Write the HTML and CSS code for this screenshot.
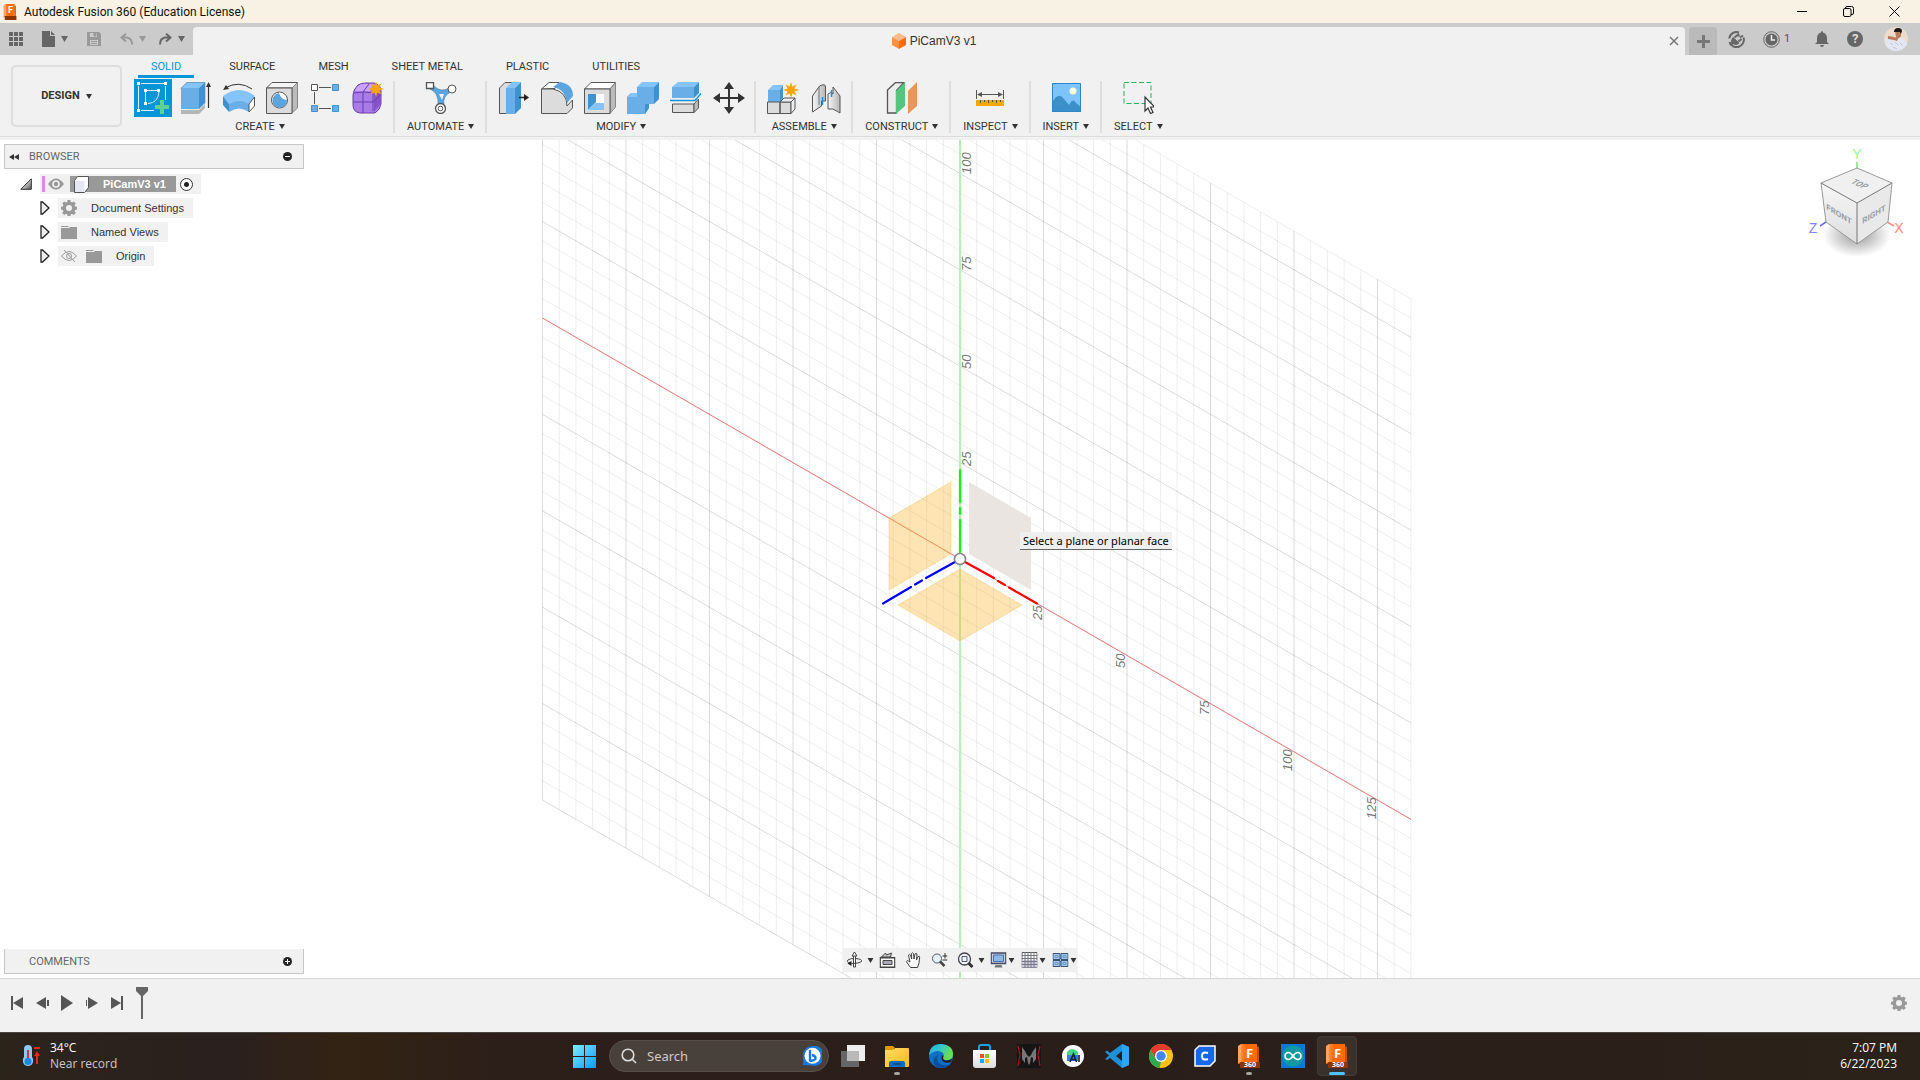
FILE: index.html
```html
<!DOCTYPE html>
<html lang="en">
<head>
<meta charset="utf-8">
<title>Autodesk Fusion 360 (Education License)</title>
<link rel="stylesheet" href="styles.css">
</head>
<body>
<svg class="defs" aria-hidden="true">
  <defs>
    <linearGradient id="gOrange" x1="0" x2="1"><stop offset="0" stop-color="#ff8a3c"/><stop offset=".3" stop-color="#ff6b00"/><stop offset="1" stop-color="#ff6b00"/></linearGradient>
    <linearGradient id="gWin" x1="0" y1="0" x2="1" y2="1"><stop offset="0" stop-color="#7cecff"/><stop offset="1" stop-color="#0a9bff"/></linearGradient>
    <linearGradient id="gFolder" x1="0" y1="0" x2="1" y2="1"><stop offset="0" stop-color="#ffdc6b"/><stop offset="1" stop-color="#fcb912"/></linearGradient>
    <linearGradient id="gEdge" x1="0" y1="0" x2="1" y2=".4"><stop offset="0" stop-color="#2ba9e8"/><stop offset=".5" stop-color="#33c7c9"/><stop offset="1" stop-color="#6be04f"/></linearGradient>
    <linearGradient id="gStore" x1="0" y1="0" x2="0" y2="1"><stop offset="0" stop-color="#fff"/><stop offset="1" stop-color="#dcdcdc"/></linearGradient>
    <linearGradient id="gMetal" x1="0" x2="1"><stop offset="0" stop-color="#f6f6f6"/><stop offset="1" stop-color="#b5b5b5"/></linearGradient>
    <linearGradient id="gTri" x1="0" y1="0" x2="1" y2="1"><stop offset=".3" stop-color="#eee"/><stop offset="1" stop-color="#555"/></linearGradient>
    <symbol id="caret" viewBox="0 0 6 5"><path d="M0 0h6L3 5z" fill="currentColor"/></symbol>
    <symbol id="star" viewBox="0 0 16 16"><path d="M8 0l1.400 4.600L13.600 2.400 11.400 6.600 16 8l-4.600 1.400 2.200 4.200-4.200-2.200L8 16l-1.400-4.600-4.200 2.200 2.200-4.200L0 8l4.600-1.400L2.400 2.400l4.200 2.200z" fill="#ffa500"/></symbol>
    <symbol id="gear" viewBox="0 0 16 16"><path fill-rule="evenodd" fill="currentColor" d="M6.600 0h2.800l.4 2 1.300.5 1.700-1.100 2 2-1.200 1.700.5 1.300 1.900.300v2.800l-1.900.4-.5 1.300 1.200 1.700-2 2-1.700-1.200-1.300.5-.4 1.900H6.600l-.4-1.900-1.300-.5-1.700 1.200-2-2 1.200-1.700-.5-1.300L0 9.500V6.700l1.900-.3.5-1.300-1.200-1.700 2-2 1.700 1.100L6.200 2zM8 5a3 3 0 1 0 0 6 3 3 0 0 0 0-6z"/></symbol>
    <symbol id="folder" viewBox="0 0 16 14"><path d="M0 1h7l1 1H0zM0 3h8l1-1h7v12H0z" fill="#999"/></symbol>
    <symbol id="expand" viewBox="0 0 10 14"><path d="M1 1h1.500L9 7l-6.500 6H1z" fill="#eee" stroke="#222" stroke-width="1.300"/></symbol>
    <symbol id="fusion" viewBox="0 0 24 24"><path d="M1 2l3-2v19l-3 1z" fill="#ffa366"/><path d="M4 0h16v18H4z" fill="url(#gOrange)"/><path d="M20 2l2 1v19h-2z" fill="#c25000"/><path d="M3 18h20v6H3z" fill="#8a3600"/><path d="M3 18l-2 2h2z" fill="#c25000"/></symbol>
  </defs>
</svg>

<header class="titlebar">
  <span class="app-badge"><svg width="14" height="16" viewBox="0 0 24 24" preserveAspectRatio="none"><use href="#fusion"/></svg><b>F</b></span>
  <h1 class="app-title">Autodesk Fusion 360 (Education License)</h1>
  <div class="win-controls">
    <button aria-label="Minimize"><svg width="11" height="11"><path d="M0 5.500h10" stroke="#000"/></svg></button>
    <button aria-label="Restore"><svg width="11" height="11" fill="none" stroke="#000"><rect x=".5" y="2.500" width="7.500" height="8" rx="1.500"/><path d="M2.500 2.500V2q0-1.500 1.500-1.500h4.500q2 0 2 2V7q0 1.500-1.500 1.500H8"/></svg></button>
    <button aria-label="Close"><svg width="11" height="11"><path d="M.5.500l10 10m0-10l-10 10" stroke="#000"/></svg></button>
  </div>
</header>

<div class="tabbar">
  <div class="quick">
    <button aria-label="Data panel"><svg width="14" height="14" fill="#666"><path d="M0 0h4v4H0zM5 0h4v4H5zM10 0h4v4h-4zM0 5h4v4H0zM5 5h4v4H5zM10 5h4v4h-4zM0 10h4v4H0zM5 10h4v4H5zM10 10h4v4h-4z"/></svg></button>
    <button aria-label="File"><svg width="13" height="16" fill="#666"><path d="M0 0h8v5h5v11H0zM9 0l4 4H9z"/></svg><svg class="caret-lg"><use href="#caret"/></svg></button>
    <button class="faded" aria-label="Save"><svg width="14" height="14"><path d="M0 0h12l2 2v12H0z" fill="#999"/><path d="M3 1h7v4H3zM3 8h8v5H3z" fill="#cbcbcb"/><path d="M7 1h2v3H7zM4 9.500h6M4 11.500h6" stroke="#999" fill="#999"/></svg></button>
    <button class="faded" aria-label="Undo"><svg width="13" height="12" fill="none" stroke="#999" stroke-width="2"><path d="M6 .8L1.500 4.500 6 8.500M2 4.500h5q5 1 5 7"/></svg><svg class="caret-lg"><use href="#caret"/></svg></button>
    <button class="redo" aria-label="Redo"><svg width="13" height="12" fill="none" stroke="#666" stroke-width="2"><path d="M7 .8l4.500 3.700L7 8.500M11 4.500H6q-5 1-5 7"/></svg><svg class="caret-lg"><use href="#caret"/></svg></button>
  </div>
  <div class="doc-tab">
    <svg width="14" height="16"><path d="M7 0l7 4-7 4-7-4z" fill="#ffb98a"/><path d="M0 4l7 4v8l-7-4z" fill="#ff9147"/><path d="M14 4L7 8v8l7-4z" fill="#ff6b00"/></svg>
    <span>PiCamV3 v1</span>
    <button class="doc-close" aria-label="Close tab"><svg width="10" height="10"><path d="M1 1l8 8m0-8L1 9" stroke="#777" stroke-width="1.500"/></svg></button>
  </div>
  <button class="new-tab" aria-label="New tab"><svg width="13" height="13"><path d="M0 6.500h13M6.500 0v13" stroke="#777" stroke-width="3"/></svg></button>
  <div class="account">
    <button aria-label="Extensions"><svg width="17" height="17" viewBox="0 0 17 17" fill="none" stroke="#666"><path d="M11 1.500A7.300 7.300 0 0 0 1.300 7.500M1.500 11A7.300 7.300 0 1 0 15.500 6.500" stroke-width="2"/><path d="M2 14l4-3.500" stroke-width="2.500"/><path d="M5 6.500l6 5.500q-3 3-6 .500t0-6z" fill="#666"/><path d="M6.500 6.500l3-2.500M10.500 10.500l3-2.500M10 2.500l1 3M15 4.500l-3 2" stroke-width="2"/></svg></button>
    <button class="jobs" aria-label="Job status"><svg width="17" height="17"><circle cx="8.500" cy="8.500" r="7.800" fill="none" stroke="#666"/><circle cx="8.500" cy="8.500" r="6" fill="#666"/><path d="M8.500 4v5H12" stroke="#eee" stroke-width="1.500" fill="none"/></svg><span>1</span></button>
    <button aria-label="Notifications"><svg width="14" height="16"><path d="M7 0q1 0 1 1.500 4 1 4 6V11l2 2H0l2-2V7.500q0-5 4-6Q6 0 7 0zM5 14h4q-.5 2-2 2t-2-2z" fill="#666"/></svg></button>
    <button class="help" aria-label="Help">?</button>
    <button class="profile" aria-label="Profile"><svg width="24" height="24"><clipPath id="face"><circle cx="12" cy="12" r="12"/></clipPath><g clip-path="url(#face)"><path d="M0 0h24v24H0z" fill="#ecdccb"/><path d="M1 12q6-2 9 2l5-4q8 0 8 10v5H3z" fill="#e3e7f1"/><path d="M4 9q4 0 7 1.500l4-.500-2 4-3-1-6-1z" fill="#b87d5c"/><path d="M11 4h6v5q-2 4-5 1z" fill="#b87d5c"/><path d="M10 5q0-4 4-4t4 3l-1 3-1-2h-4z" fill="#1d1715"/><path d="M6 16l3 2m2-3l3 3m-5 2l4 2m3-6l3 3" stroke="#bfc6d8"/></g></svg></button>
  </div>
</div>

<section class="ribbon">
  <button class="workspace">DESIGN <svg class="caret"><use href="#caret"/></svg></button>
  <div class="ribbon-main">
    <nav class="ribbon-tabs">
      <a class="active" href="#solid">SOLID</a><a href="#surface">SURFACE</a><a href="#mesh">MESH</a><a href="#sheet">SHEET METAL</a><a href="#plastic">PLASTIC</a><a href="#utilities">UTILITIES</a>
    </nav>
    <div class="panels">
      <div class="panel create">
        <div class="tools">
          <button class="on" aria-label="Create Sketch"><svg viewBox="0 0 38 38" width="38" height="38" fill="none" stroke="#fff"><path d="M7 4.500h23M31.500 7v14M4.500 7v23M7 31.500h13" stroke="#d8ecf8"/><path d="M3 3h3v3H3zM30 3h3v3h-3zM3 30h3v3H3z" fill="#fff" stroke="none"/><path d="M13 11.500h10M11.500 13v10M25 13q-1 11-11 11.500" stroke="#d8ecf8"/><path d="M10 10h3v3h-3zM23 10h3v3h-3zM10 23h3v3h-3z" fill="#fff" stroke="none"/><path d="M28 21v14M21 28h14" stroke="#5fd38d" stroke-width="4"/></svg></button>
          <button aria-label="Extrude"><svg viewBox="0 0 32 32"><path d="M1 28h18l6-6v4l-6 6H1z" fill="#b5b5b5"/><path d="M1 6l6-6h18l-6 6z" fill="#84c4fa"/><path d="M1 6h18v21H1z" fill="#69aee6"/><path d="M19 6l6-6v21l-6 6z" fill="#3f92cf"/><path d="M.5 6.500L7 .5h18v21" fill="none" stroke="#5e88a8" stroke-width=".6"/><path d="M28.500 26V3" stroke="#333" stroke-width="1.200"/><path d="M28.500 0l2.500 5h-5z" fill="#333"/></svg></button>
          <button aria-label="Revolve"><svg viewBox="0 0 32 32"><path d="M0 14q16-12 32 0l-6 8q-9-7-20 0z" fill="#84c4fa"/><path d="M0 14l6 8v8l-6-7z" fill="#3f92cf"/><path d="M6 22q11-7 20 0v8q-10-7-20 0z" fill="#69aee6"/><path d="M26 22l5.500-7v9L26 30z" fill="#fff" stroke="#555"/><path d="M2 6q14-8 27 1" fill="none" stroke="#333"/><path d="M0 8l3-5 3 4z" fill="#333"/></svg></button>
          <button aria-label="Hole"><svg viewBox="0 0 32 32"><path d="M.5 6L6 .500h25.500L26 6z" fill="#f4f4f4" stroke="#555"/><path d="M26 6l5.500-5.500V26L26 31z" fill="#bbb" stroke="#888"/><path d="M.5 6H26v25.500H.5z" fill="#dcdcdc" stroke="#555"/><circle cx="13.500" cy="18" r="8" fill="#fff" stroke="#555"/><path d="M13 11q2 7 8 7 0 7-7 7.500-7 0-7.500-7Q7 12 13 11z" fill="#5aa5e0"/></svg></button>
          <button aria-label="Pattern"><svg viewBox="0 0 32 32"><path d="M10 5.500h12M10 26.500h12M5.500 10v12" stroke="#555"/><path d="M2.500 2.500h6v6h-6z" fill="#fff" stroke="#555"/><path d="M23.500 2.500h6v6h-6zM2.500 23.500h6v6h-6zM23.500 23.500h6v6h-6z" fill="#69aee6" stroke="#3f92cf"/></svg></button>
          <button aria-label="Create Form"><svg viewBox="0 0 32 32"><path d="M1 13Q1 8 6 3q3-2 8-2h8q7 2 7 8v13q-1 6-6 9H8q-7-1-7-8z" fill="#a97be8" stroke="#6a3fae"/><path d="M5 5q4-4 9-3h8L18 9H3z" fill="#c9a3ff"/><path d="M22 12l7-5v14l-7 9z" fill="#8450cc"/><path d="M1 20h20l8-8M11 10v21M2 11q10-2 19 0v18M11 10l6-8" fill="none" stroke="#6a3fae"/><use href="#star" x="16" y="-1" width="16" height="16"/></svg></button>
        </div>
        <button class="menu">CREATE <svg class="caret"><use href="#caret"/></svg></button>
      </div>
      <div class="panel">
        <div class="tools">
          <button aria-label="Automate"><svg viewBox="0 0 32 32"><path d="M5 7q9 4 8 16h6Q17 14 27 9l-3-3q-8 5-15-2z" fill="#5aa5e0" stroke="#3f7fb0" stroke-width=".6"/><path d="M14 12h5l-2 6z" fill="#f1f1f1"/><circle cx="27" cy="7" r="4" fill="#fff" stroke="#555"/><path d="M1.500.500h7v6h-7z" fill="#fff" stroke="#555" stroke-width="1.300"/><circle cx="15.500" cy="26.500" r="5" fill="#fff" stroke="#555" stroke-width="1.300"/><circle cx="15.500" cy="26.500" r="2.300" fill="none" stroke="#555"/></svg></button>
        </div>
        <button class="menu">AUTOMATE <svg class="caret"><use href="#caret"/></svg></button>
      </div>
      <div class="panel">
        <div class="tools">
          <button aria-label="Press Pull"><svg viewBox="0 0 32 32"><path d="M1.500 6L7 .500h9l-5 5.500v25.500H1.500z" fill="#dcdcdc" stroke="#555"/><path d="M8 6l6-6h9l-6 6z" fill="#84c4fa"/><path d="M8 6h9v26H8z" fill="#69aee6"/><path d="M17 6l6-6v26l-6 6z" fill="#3f92cf"/><path d="M21 15.500h6" stroke="#222" stroke-width="1.500"/><path d="M26 12l5 3.500-5 3.500z" fill="#222"/></svg></button>
          <button aria-label="Fillet"><svg viewBox="0 0 32 32"><path d="M.5 7L8 .5h10l-4 6h-2z" fill="#fff" stroke="#555"/><path d="M.5 7H12q14 3 14 17l5.500-6v8L26 31.500H.5z" fill="#dcdcdc" stroke="#555"/><path d="M12 5l7-5q13 2 13 14l-6 7Q24 7 12 5z" fill="#5aa5e0"/></svg></button>
          <button aria-label="Shell"><svg viewBox="0 0 32 32"><path d="M.5 7L7 .500h24.500L26 7z" fill="#fff" stroke="#555"/><path d="M26 7l5.500-6.500V25L26 31.500z" fill="#bbb" stroke="#888"/><path d="M.5 7H26v24.500H.5z" fill="#dcdcdc" stroke="#555"/><path d="M4 12h16v16H4z" fill="#fff"/><path d="M4 12h8v8l-8 8z" fill="#3f92cf"/><path d="M4 28l7-7h9v7z" fill="#84c4fa"/></svg></button>
          <button aria-label="Combine"><svg viewBox="0 0 32 32"><path d="M10 5l5-5h17l-5 5z" fill="#84c4fa"/><path d="M27 5l5-5v17l-5 5z" fill="#3f92cf"/><path d="M0 15l4-4h6V5h17v17h-5v4l-4 6H0z" fill="#69aee6"/><path d="M18 22h4v4l-4 6z" fill="#3f92cf"/><path d="M0 15l4-4h6v4z" fill="#84c4fa"/></svg></button>
          <button aria-label="Split Body"><svg viewBox="0 0 32 32"><path d="M2 5l6-5h21l-5 5z" fill="#84c4fa"/><path d="M2 5h22v11H2z" fill="#69aee6"/><path d="M24 5l5-5v11l-5 5z" fill="#3f92cf"/><path d="M2.500 22H24v8.500H2.500z" fill="#dcdcdc" stroke="#555"/><path d="M24 22l4.500-5v9L24 30.500z" fill="#bbb" stroke="#555"/><path d="M0 18.500h25l6-7" fill="none" stroke="#1192e0" stroke-width="1.400"/></svg></button>
          <button aria-label="Move"><svg viewBox="0 0 32 32"><path d="M16 5v22M5 16h22" stroke="#333" stroke-width="2"/><path d="M16 0l5 7H11zM16 32l5-7H11zM0 16l7-5v10zM32 16l-7-5v10z" fill="#333"/></svg></button>
        </div>
        <button class="menu">MODIFY <svg class="caret"><use href="#caret"/></svg></button>
      </div>
      <div class="panel">
        <div class="tools">
          <button aria-label="New Component"><svg viewBox="0 0 32 32"><path d="M1 8l5-5h10l-3 5z" fill="#84c4fa"/><path d="M1 8h12v12H1z" fill="#69aee6"/><path d="M13 8l3-5v13l-3 4z" fill="#3f92cf"/><path d="M.5 20h12.500v11.500H.5zM13 20h11v11.500H13z" fill="#dcdcdc" stroke="#555"/><path d="M13 20l4-4h11l-4 4zM24 20l4-4v11l-4 4.500z" fill="#eee" stroke="#555"/><use href="#star" x="16" y="0" width="16" height="16"/></svg></button>
          <button aria-label="Joint"><svg viewBox="0 0 32 32"><path d="M2.500 14l7-10q6-3 6 1v14h-4v5l-9 6z" fill="url(#gMetal)" stroke="#555"/><path d="M9 5v18" stroke="#777"/><path d="M30 31l-7-4h-5V12q3-3 5 0V5l7 9z" fill="url(#gMetal)" stroke="#555"/><path d="M12.500 15v8M21.500 8v7" stroke="#1192e0" stroke-width="1.500"/></svg></button>
        </div>
        <button class="menu">ASSEMBLE <svg class="caret"><use href="#caret"/></svg></button>
      </div>
      <div class="panel">
        <div class="tools">
          <button aria-label="Offset Plane"><svg viewBox="0 0 32 32"><path d="M1.500 8l8-7.500H18l-7.500 8v22.500h-9z" fill="#ececec" stroke="#555" stroke-width="1.300"/><path d="M10 9l9-9v24l-9 8z" fill="#55c47c"/><path d="M22 9l9-9v24l-9 8z" fill="#e8965f"/></svg></button>
        </div>
        <button class="menu">CONSTRUCT <svg class="caret"><use href="#caret"/></svg></button>
      </div>
      <div class="panel">
        <div class="tools">
          <button aria-label="Measure"><svg viewBox="0 0 32 32"><path d="M2.500 8v9M29.500 8v9M4 12.500h24" stroke="#555"/><path d="M3 12.500l5-2.500v5zM29 12.500l-5-2.500v5z" fill="#555"/><path d="M2 18h28v6H2z" fill="#ffa500"/><path d="M6.500 18v3M10.500 18v2M14.500 18v3M18.500 18v2M22.500 18v3M26.500 18v2" stroke="#555"/></svg></button>
        </div>
        <button class="menu">INSPECT <svg class="caret"><use href="#caret"/></svg></button>
      </div>
      <div class="panel">
        <div class="tools">
          <button aria-label="Insert image"><svg viewBox="0 0 32 32"><path d="M2 1h29v29H2z" fill="#7cc4fb"/><path d="M2 21q6-12 12-4l5 6q4-7 6-3l6 5v5H2z" fill="#3b90c9"/><path d="M2.500 1.500h28v28h-28z" fill="none" stroke="#2f86c4"/><circle cx="23" cy="9" r="3.500" fill="#fffbd5"/></svg></button>
        </div>
        <button class="menu">INSERT <svg class="caret"><use href="#caret"/></svg></button>
      </div>
      <div class="panel last">
        <div class="tools">
          <button aria-label="Select"><svg viewBox="0 0 32 32"><rect x="2" y=".5" width="27" height="21" fill="none" stroke="#27b35a" stroke-dasharray="5 2.500"/><path d="M23 15v14l3-3 2.500 5.500 2.500-1-2.500-5.500h4z" fill="#fff" stroke="#333" stroke-width="1.200"/></svg></button>
        </div>
        <button class="menu">SELECT <svg class="caret"><use href="#caret"/></svg></button>
      </div>
    </div>
  </div>
</section>

<main class="viewport">
  <svg class="scene" viewBox="0 140 1920 838" preserveAspectRatio="xMidYMid slice">
    <g id="grid" fill="none" transform="matrix(16.7 9.640 0 19.280 960 559)"></g>
    <path class="axis-y" d="M960 0v1041"/>
    <path class="axis-x" d="M542.500 318L1411 819.400"/>
    <g class="ticks">
      <text transform="translate(971 174) rotate(-90)">100</text>
      <text transform="translate(971 271) rotate(-90)">75</text>
      <text transform="translate(971 369) rotate(-90)">50</text>
      <text transform="translate(971 466) rotate(-90)">25</text>
      <text transform="translate(1042 620) rotate(-90)">25</text>
      <text transform="translate(1125 668) rotate(-90)">50</text>
      <text transform="translate(1209 715) rotate(-90)">75</text>
      <text transform="translate(1292 771) rotate(-90)">100</text>
      <text transform="translate(1376 819) rotate(-90)">125</text>
    </g>
    <path class="plane" d="M951 482l-62 36v72l62-36zM960 569l62 36-62 36-62-36z"/>
    <path class="plane-hover" d="M969 482l62 36v72l-62-36z"/>
    <g stroke-width="2.200" stroke-linecap="round">
      <path stroke="#0f0" d="M960 470v32M960 508v6M960 520v32"/>
      <path stroke="#f00" d="M965 562l29 16M998 581l7 4M1009 587.500l28 16"/>
      <path stroke="#00f" d="M955 562l-29 16M922 580.500l-7 4M911 587l-28 16.500"/>
    </g>
    <circle cx="960" cy="559" r="5.500" fill="#fff" stroke="#888" stroke-width="1.600"/>
  </svg>

  <div class="hint" role="tooltip">Select a plane or planar face</div>

  <svg class="viewcube" width="104" height="120" viewBox="1804 146 104 120">
    <defs>
      <radialGradient id="shade"><stop offset="0" stop-color="#000" stop-opacity=".4"/><stop offset="1" stop-color="#000" stop-opacity="0"/></radialGradient>
      <linearGradient id="cubeL" x1="0" y1="0" x2="0" y2="1"><stop offset="0" stop-color="#f6f6f6"/><stop offset="1" stop-color="#dedede"/></linearGradient>
    </defs>
    <ellipse cx="1857" cy="235" rx="34" ry="22" fill="url(#shade)"/>
    <path d="M1857 162v7" stroke="#6df36d" stroke-width="1.600"/><path d="M1826 222l-6 4" stroke="#6d6df3" stroke-width="1.600"/><path d="M1887 222l7 4" stroke="#f38a8a" stroke-width="1.600"/>
    <path d="M1821 183l36 20v41l-31-22z" fill="url(#cubeL)"/><path d="M1892 183l-35 20v41l31-22z" fill="#e9e9e9"/><path d="M1857 168l35 15-35 20-36-20z" fill="#f0f0f0"/>
    <path d="M1857 168l35 15-4 39-31 22-31-22-5-39z" fill="none" stroke="#999"/><path d="M1821 183l36 20 35-20M1857 203v41" fill="none" stroke="#777"/>
    <g class="cube-face">
      <text transform="translate(1857 186) rotate(24) skewX(-32)">TOP</text>
      <text transform="translate(1839 217) skewY(31)">FRONT</text>
      <text transform="translate(1874 217) skewY(-31)">RIGHT</text>
    </g>
    <g class="cube-axis"><text x="1857" y="159" fill="#8dfc8d">Y</text><text x="1813" y="233" fill="#8181fb">Z</text><text x="1899" y="233" fill="#fb8181">X</text></g>
  </svg>

  <aside class="browser">
    <div class="pane-head">
      <svg width="10" height="6"><path d="M5 0v6L0 3zM10 0v6L5 3z" fill="#333"/></svg>
      <h2>BROWSER</h2>
      <button aria-label="Minimize browser"><svg width="9" height="9"><circle cx="4.500" cy="4.500" r="4.500" fill="#222"/><path d="M2 4.500h5" stroke="#fff"/></svg></button>
    </div>
    <ul class="tree">
      <li class="root"><svg width="12" height="12"><path d="M11.300 .8v10.500H.8z" fill="url(#gTri)" stroke="#333"/></svg>
        <span class="node"><i class="mark"></i>
          <svg width="16" height="12"><path d="M0 6q8-11 16 0-8 11-16 0z" fill="#999"/><circle cx="8" cy="6" r="3.800" fill="#f1f1f1"/><circle cx="8" cy="6" r="2.200" fill="#999"/></svg>
          <span class="picked"><svg width="17" height="17"><path d="M1.500 4.500l3-4h11v11l-4 5h-10z" fill="#fff" stroke="#555"/><path d="M2 5h9.500v11H2z" fill="#e6e7f1"/></svg>PiCamV3 v1</span>
          <input type="radio" name="active" aria-label="Activate component" checked>
        </span></li>
      <li><svg width="10" height="14"><use href="#expand"/></svg><span class="node"><svg class="gray" width="16" height="16"><use href="#gear"/></svg>Document Settings</span></li>
      <li><svg width="10" height="14"><use href="#expand"/></svg><span class="node"><svg width="16" height="14"><use href="#folder"/></svg>Named Views</span></li>
      <li class="origin"><svg width="10" height="14"><use href="#expand"/></svg><span class="node"><svg width="16" height="12" fill="none" stroke="#999"><path d="M.5 6q7.500-9 15 0-7.500 9-15 0zM3 0l11 12"/><circle cx="8" cy="6" r="2.500"/></svg><svg width="16" height="14"><use href="#folder"/></svg>Origin</span></li>
    </ul>
  </aside>

  <div class="pane-head comments">
    <h2>COMMENTS</h2>
    <button aria-label="Show comments"><svg width="9" height="9"><circle cx="4.500" cy="4.500" r="4.500" fill="#222"/><path d="M2 4.500h5M4.500 2v5" stroke="#fff"/></svg></button>
  </div>

  <div class="navbar">
    <button class="drop" aria-label="Orbit"><svg width="16" height="16" fill="none" stroke="#444"><path d="M7 4v11h2V4M8 0l2.500 4h-5z" fill="#fff"/><path d="M4 11Q-1 10 1.500 8 4 6.500 7 6.500m2 0q7 .5 6 3-2 2-10 2"/><path d="M5 9v5L1 11.500z" fill="#222" stroke="none"/></svg><svg class="caret"><use href="#caret"/></svg></button>
    <button aria-label="Look at"><svg width="16" height="16" fill="#fff" stroke="#444"><path d="M2 5l4-4 1 2 5-2-1 4z" fill="#ccc"/><path d="M.700 5.700h14.600v9.600H.700z" stroke-width="1.400"/><path d="M3.500 8.500h9v4h-9z" fill="#aab"/></svg></button>
    <button aria-label="Pan"><svg width="16" height="16"><path d="M5 15.500L.700 9.500q.5-1.500 2.300-.5l1.500 1-1.500-7q1-1.500 2 0L6.200 7 6 1.500q1-1.500 2 0L8.500 7l1-5q1-1.300 2 0L11 8l1.500-3.500q1.500-.8 1.700.5L13.500 11 12 15.500z" fill="#fff" stroke="#444"/></svg></button>
    <button aria-label="Zoom"><svg width="16" height="16" fill="none"><circle cx="5.500" cy="6.500" r="4.500" fill="#e4f2f8" stroke="#556"/><path d="M8.500 9.500l4.500 4.500" stroke="#444" stroke-width="2.500"/><path d="M11 4h5M13.500 1v5.500M11 8h5" stroke="#333"/></svg></button>
    <button class="drop" aria-label="Fit"><svg width="16" height="16" fill="none"><circle cx="7" cy="7" r="6" fill="#eef5f8" stroke="#445" stroke-width="1.300"/><path d="M4.500 4.500h5v5h-5z" stroke="#556"/><path d="M11 11l4 4" stroke="#333" stroke-width="3"/></svg><svg class="caret"><use href="#caret"/></svg></button>
    <button class="tight" aria-label="Display settings"><svg width="16" height="16"><path d="M.7 1h14.600v10.500H.7z" fill="#ccd" stroke="#446" stroke-width="1.300"/><path d="M3 3h10v6.500H3z" fill="#8fb8ea" stroke="#47a"/><path d="M5 13h6l1 2.500H4z" fill="#777"/></svg><svg class="caret"><use href="#caret"/></svg></button>
    <button class="tight" aria-label="Grid"><svg width="16" height="16"><path d="M.5.500h15v15H.5z" fill="#fff" stroke="#555"/><path d="M.5 8h15v7.500H.5z" fill="#ccd"/><path d="M3.500 0v16M6.500 0v16M9.500 0v16M12.500 0v16M0 3.500h16M0 6.500h16M0 9.500h16M0 12.500h16" stroke="#778"/></svg><svg class="caret"><use href="#caret"/></svg></button>
    <button class="tight" aria-label="Viewports"><svg width="16" height="14" fill="#a9c6ea" stroke="#357"><path d="M.5.500h7v6h-7zM8.500.500h7v6h-7zM.5 7.500h7v6h-7zM8.500 7.500h7v6h-7z"/><path d="M2.500 2.500h3v2h-3zM10.500 2.500h3v2h-3zM2.500 9.500h3v2h-3zM10.500 9.500h3v2h-3z" stroke="#69c"/></svg><svg class="caret"><use href="#caret"/></svg></button>
  </div>
</main>

<section class="timeline">
  <button aria-label="Go to start"><svg width="13" height="14" fill="#555"><path d="M0 0h2v14H0zM12 1v12L2 7z"/></svg></button>
  <button aria-label="Step back"><svg width="13" height="14" fill="#555"><path d="M10 1v12L0 7zM11 4h2v6h-2z"/></svg></button>
  <button aria-label="Play"><svg width="13" height="16" fill="#555"><path d="M0 0l12 8-12 8z"/></svg></button>
  <button aria-label="Step forward"><svg width="13" height="14" fill="#555"><path d="M2 1v12l10-6zM0 4h1v6H0z"/></svg></button>
  <button aria-label="Go to end"><svg width="13" height="14" fill="#555"><path d="M10 0h2v14h-2zM0 1v12l10-6z"/></svg></button>
  <svg class="marker" width="12" height="32" fill="#666"><path d="M0 0h12v4L7 9v23H5V9L0 4z"/></svg>
  <button class="tl-settings gray" aria-label="Timeline settings"><svg width="16" height="16"><use href="#gear"/></svg></button>
</section>

<footer class="taskbar">
  <button class="weather">
    <svg width="19" height="24"><path d="M2 5q0-4 4-4t4 4v8q2 2 1 5-1 4-5 4t-5-4q-1-3 1-5z" fill="#8ec8f5"/><path d="M5 6h2v11H5z" fill="#d33"/><circle cx="6" cy="17.500" r="3.500" fill="#1a8ae0"/><path d="M12 3h6v2h-6zM15 7l3 5h-2v8h-2v-8h-2z" fill="#f0221a"/></svg>
    <span><b>34°C</b><small>Near record</small></span>
  </button>
  <div class="apps">
    <button aria-label="Start"><svg width="24" height="24"><path d="M0 1h11v11H0zM12 1h11v11H12zM0 13h11v11H0zM12 13h11v11H12z" fill="url(#gWin)"/></svg></button>
    <label class="search">
      <svg width="16" height="16" fill="none" stroke="#ddd" stroke-width="1.600"><circle cx="7" cy="7" r="5.800"/><path d="M11 11l4 4"/></svg>
      <input type="search" placeholder="Search" aria-label="Search">
      <svg width="20" height="20"><path d="M10 0a10 10 0 1 1 0 19.500L1 19V10Q1 1 10 0z" fill="#1677e8"/><circle cx="10.500" cy="9.800" r="8" fill="#fff"/><path d="M8 4v10.500q3 1 5.500-1.500.5-3-3.500-4" fill="none" stroke="#1677e8" stroke-width="2.400"/></svg>
    </label>
    <button aria-label="Task view"><svg width="24" height="24"><path d="M6 1h18v16H6z" fill="#eee"/><path d="M0 7h18v16H0z" fill="#666"/><path d="M6 7h12v10H6z" fill="#b9b9b9"/></svg></button>
    <button class="running" aria-label="File Explorer"><svg width="24" height="24"><path d="M0 3q0-1 1-1h7l2 2h-1v3H0z" fill="#e09a00"/><path d="M0 6h8l2-2h13q1 0 1 1v17q0 1-1 1H0z" fill="url(#gFolder)"/><path d="M4 23v-4q0-2 2-2h12q2 0 2 2v4z" fill="#0f6cbd"/><path d="M8 20h8" stroke="#0a4c8a" stroke-width="1.500"/></svg></button>
    <button aria-label="Edge"><svg width="24" height="24"><circle cx="12" cy="12" r="12" fill="#0e6fc4"/><path d="M0 11Q1 0 12 0q12 1 12 10 0 6-6 6-4 0-4-2 2-2 0-5Q8 4 0 11z" fill="url(#gEdge)"/><path d="M9 11q-3 8 5 10 4 1 8-2-4 6-11 5-8-2-6-9 1-3 4-4z" fill="#0a4f9c"/><path d="M13 11q1.500 1.500 1 3 0 3 5 2.500l4-1.500-1 3q-7 2-9-2-1-2 0-5z" fill="#241c18"/></svg></button>
    <button aria-label="Microsoft Store"><svg width="24" height="24"><path d="M6 6V3q0-2 2-2h7q2 0 2 2v3" fill="none" stroke="#1ba1e2" stroke-width="2"/><path d="M0 6h23v15q0 3-3 3H3q-3 0-3-3z" fill="url(#gStore)"/><path d="M7 10h4v4H7z" fill="#f1511b"/><path d="M12 10h4v4h-4z" fill="#80cc28"/><path d="M7 15h4v4H7z" fill="#00adef"/><path d="M12 15h4v4h-4z" fill="#fbbc09"/></svg></button>
    <button aria-label="PredatorSense"><svg width="24" height="24"><path d="M0 0h24v24H0z" fill="#151515"/><path d="M1 2l2 9-2 11M23 2l-2 9 2 11" stroke="#b01818" fill="none" stroke-width="1.200"/><path d="M5 3l3 4 2 4 2 2 2-2 2-4 3-4v12l-3 4v-5l-2-1-1 6-1 2-1-2-1-6-2 1v5l-3-4z" fill="#777"/></svg></button>
    <button aria-label="Android Studio"><svg width="24" height="24"><circle cx="12" cy="12" r="11" fill="#fff"/><path d="M6 8h11v9H6z" fill="#3b7de0"/><path d="M6 8q5-6 11 0v3H6z" fill="#3ddc84"/><path d="M9 18l3.500-8 3 8M10 15.500h4M18 11v7" stroke="#123" stroke-width="1.600" fill="none"/></svg></button>
    <button aria-label="Visual Studio Code"><svg width="24" height="24"><path d="M17 0l7 3v18l-7 3L5 14l-3 2-2-1 4-3.500L0 8l2-1.500L5 9zm0 7l-6 5 6 5z" fill="#1f8fd6" fill-rule="evenodd"/><path d="M17 0l7 3v18l-7 3z" fill="#33a5ee"/></svg></button>
    <button aria-label="Chrome"><svg width="24" height="24"><circle cx="12" cy="12" r="12" fill="#fbc116"/><path d="M1.600 6A12 12 0 0 1 22.400 6H12L6.800 15z" fill="#e33b2e"/><path d="M1.600 6l5.200 9L12 18l-1.500 5.900A12 12 0 0 1 1.600 6z" fill="#2da94f"/><circle cx="12" cy="12" r="6" fill="#fff"/><circle cx="12" cy="12" r="4.700" fill="#4285f4"/></svg></button>
    <button aria-label="Cura"><svg width="24" height="24"><path d="M6 2h16v15l-5 5H2V6z" fill="#1668e8" stroke="#fff" stroke-width="1.500"/><path d="M15 9q-6-2-6 3t6 3" fill="none" stroke="#fff" stroke-width="2"/></svg></button>
    <button class="running" aria-label="Fusion 360"><span class="fusion"><svg width="24" height="24"><use href="#fusion"/></svg><b>F</b><small>360</small></span></button>
    <button aria-label="Arduino"><svg width="24" height="24"><path d="M0 0h24v24H0z" fill="#0a78d4"/><circle cx="12" cy="12" r="10.500" fill="#139aa0"/><path d="M12 12q-2.500-3.500-4.500-3.500a3.500 3.500 0 0 0 0 7q2 0 4.500-3.500t4.500-3.500a3.500 3.500 0 0 1 0 7q-2 0-4.500-3.500z" fill="none" stroke="#fff" stroke-width="1.600"/></svg></button>
    <button class="running current" aria-label="Fusion 360, active window"><span class="fusion"><svg width="24" height="24"><use href="#fusion"/></svg><b>F</b><small>360</small></span></button>
  </div>
  <div class="clock"><time>7:07 PM</time><time datetime="2023-06-22">6/22/2023</time></div>
</footer>
<script src="grid.js"></script>
</body>
</html>
```
FILE: styles.css
```css
* { box-sizing: border-box; }
body {
  margin: 0;
  min-height: 100vh;
  display: flex;
  flex-direction: column;
  background: #f1f1f1;
  color: #333;
  font: 11px/16px Roboto, "Liberation Sans", sans-serif;
}
button {
  display: flex;
  align-items: center;
  justify-content: center;
  margin: 0;
  padding: 0;
  border: 0;
  background: none;
  color: inherit;
  font: inherit;
}
svg { display: block; flex: none; }
h1, h2, ul { margin: 0; padding: 0; font: inherit; list-style: none; }
a { color: inherit; text-decoration: none; }
.defs { position: absolute; width: 0; height: 0; }
.caret { width: 6px; height: 5px; }
.caret-lg { width: 7px; height: 6px; }
.gray { color: #999; }

/* Title bar */
.titlebar {
  display: flex;
  align-items: center;
  height: 23px;
  padding: 0 3px;
  background: #f7f2e4;
  color: #111;
}
.app-badge { position: relative; width: 14px; }
.app-badge b { position: absolute; left: 5px; top: -1px; color: #fff; font-size: 9px; line-height: 14px; }
.app-title { margin-left: 7px; font: 12px/20px Roboto, sans-serif; }
.win-controls { display: flex; margin-left: auto; }
.win-controls button { width: 46px; height: 20px; }

/* Document tab strip */
.tabbar { display: flex; height: 32px; padding-top: 4px; background: #cbcbcb; }
.quick { display: flex; align-items: center; gap: 19px; width: 193px; padding: 0 0 4px 9px; color: #666; }
.quick button { gap: 6px; }
.quick .faded { color: #999; }
.quick .redo { margin-left: -6px; }
.doc-tab {
  position: relative;
  flex: 1;
  display: flex;
  align-items: center;
  justify-content: center;
  gap: 4px;
  padding-right: 10px;
  border-radius: 4px 4px 0 0;
  background: #f1f1f1;
  font: 12px/16px "Liberation Sans", sans-serif;
}
.doc-close { position: absolute; right: 6px; top: 9px; }
.new-tab { width: 28px; margin-left: 4px; border-radius: 4px 4px 0 0; background: #bababa; }
.account { display: flex; align-items: center; gap: 18px; width: 203px; padding: 0 0 4px 11px; }
.account .jobs { gap: 4px; margin-right: 7px; color: #646; }
.account .help { width: 16px; height: 16px; border-radius: 50%; background: #666; color: #ddd; font-weight: 700; font-size: 13px; }
.account .profile { margin-left: 3px; }

/* Ribbon */
.ribbon { display: flex; height: 85px; padding-left: 11px; border-bottom: 3px solid #f1f1f1; box-shadow: inset 0 -1px #dcdcdc; }
.workspace {
  align-self: flex-start;
  gap: 6px;
  width: 111px;
  height: 62px;
  margin-top: 10px;
  border: 2px solid #dedede;
  border-radius: 5px;
  font-weight: 700;
}
.ribbon-main { flex: 1; padding-left: 9px; }
.ribbon-tabs { display: flex; gap: 17px; padding-left: 7px; }
.ribbon-tabs a { height: 23px; padding: 4px 13px 0; line-height: 16px; }
.ribbon-tabs .active { margin-right: 5px; border-bottom: 3px solid #0696d7; color: #0696d7; }
.panels { display: flex; }
.panel { position: relative; padding: 1px 4px 0 5px; border-right: 2px solid transparent; }
.panel::after { content: ""; position: absolute; right: -2px; top: 3px; bottom: 3px; width: 2px; background: #dedede; }
.panel.last { padding-right: 0; }
.panel.last::after { display: none; }
.panel.create { padding-left: 0; }
.tools { display: flex; justify-content: center; }
.tools button { width: 43px; height: 38px; }
.tools svg { width: 32px; height: 32px; }
.tools .on svg { width: 38px; height: 38px; background: #0696d7; }
.menu { gap: 4px; width: 100%; padding: 0 7px; line-height: 19px; }

/* Modelling area */
.viewport { position: relative; flex: 1; min-height: 400px; overflow: hidden; background: #fff; }
.scene { position: absolute; width: 100%; height: 100%; }
.grid-minor, .grid-major { stroke: #000; stroke-opacity: .07; vector-effect: non-scaling-stroke; }
.grid-major { stroke-opacity: .08; }
.axis-y { stroke: #b7efb7; stroke-width: 2; }
.axis-x { stroke: #ee7c7c; stroke-width: 1; }
.ticks { fill: #777; font: italic 13px "Liberation Sans", sans-serif; }
.plane { fill: #fdae26; fill-opacity: .35; stroke: #fdae26; stroke-opacity: .3; }
.plane-hover { fill: #e9e4df; fill-opacity: .95; }
.hint {
  position: absolute;
  left: calc(50% + 60px);
  top: calc(50% - 27px);
  padding: 0 3px;
  border-bottom: 1px solid #666;
  background: #efefef;
  color: #000;
  font: 11px/17px "Noto Sans", sans-serif;
}
.viewcube { position: absolute; right: 12px; top: 6px; }
.cube-face { fill: #9a9ea3; font: 700 8px Roboto, sans-serif; text-anchor: middle; }
.cube-axis { font: 14px "Liberation Sans", sans-serif; text-anchor: middle; }

/* Browser and comments */
.browser { position: absolute; left: 4px; top: 4px; width: 300px; }
.pane-head {
  display: flex;
  align-items: center;
  height: 25px;
  padding: 0 11px 0 4px;
  border: 1px solid #c6c6c6;
  background: #f1f1f1;
  color: #666;
}
.pane-head h2 { margin-left: 10px; }
.pane-head button { margin-left: auto; }
.comments { position: absolute; left: 4px; bottom: 4px; width: 300px; padding-top: 1px; padding-left: 14px; border-top: 0; }
.tree { padding: 3px 0 0 36px; font: 11px/20px "Liberation Sans", sans-serif; }
.tree li { display: flex; align-items: center; gap: 8px; height: 24px; }
.tree .root { margin-left: -20px; }
.node { display: flex; align-items: center; height: 20px; padding: 0 9px 0 3px; background: #f1f1f1; }
.node > svg { margin-right: 14px; }
.origin .node > svg:first-child { margin-right: 9px; }
.root .node { padding: 0 8px 0 2px; }
.root .node > svg { margin-right: 6px; }
.mark { width: 3px; height: 16px; margin-right: 3px; background: #e18be0; }
.picked { display: flex; align-items: center; gap: 13px; height: 16px; padding: 0 10px 0 3px; background: #999; color: #fff; font-weight: 700; }
.tree input {
  appearance: none;
  width: 13px;
  height: 13px;
  margin: 0 0 0 4px;
  border: 1px solid #333;
  border-radius: 50%;
  background: radial-gradient(circle, #222 2px, #fff 3px);
}

/* View navigation bar */
.navbar {
  position: absolute;
  left: 50%;
  bottom: 6px;
  display: flex;
  align-items: center;
  gap: 10px;
  height: 24px;
  padding: 0 4px;
  background: #f0f0f0;
  transform: translateX(-50%);
}
.navbar .drop { gap: 5px; margin-right: -4px; }
.navbar .tight { gap: 2px; margin-right: -3px; }

/* Timeline */
.timeline {
  display: flex;
  align-items: center;
  gap: 12px;
  height: 54px;
  padding: 0 13px 5px 11px;
  border-top: 1px solid #d5d5d5;
  background: #f1f1f1;
}
.tl-settings { margin-left: auto; }

/* Windows taskbar */
.taskbar {
  display: grid;
  grid-template-columns: 1fr auto 1fr;
  align-items: center;
  height: 48px;
  padding: 0 0 2px 2px;
  border-top: 1px solid #4a4440;
  background: linear-gradient(90deg, #2b241b, #2a201e 12%, #332313 18%, #2c1f1a 26%, #2a1e1a 60%, #2b2219);
  color: #fff;
  font: 12px/16px "Open Sans", "Noto Sans", sans-serif;
}
.weather { justify-self: start; gap: 9px; padding-left: 20px; text-align: left; }
.weather b, .weather small { display: block; font: inherit; }
.weather small { color: #cfcac6; }
.apps { display: flex; align-items: center; gap: 4px; }
.apps button { position: relative; width: 40px; height: 40px; border-radius: 4px; }
.running::after { content: ""; position: absolute; bottom: 1px; width: 6px; height: 3px; border-radius: 2px; background: #a5a09c; }
.apps .current { border: 1px solid #443b36; background: #3a302c; }
.current::after { width: 16px; bottom: 0; background: #4cc2ff; }
.fusion { position: relative; color: #fff; }
.fusion b { position: absolute; left: 9px; top: 1px; font: 700 13px/16px "Open Sans", sans-serif; }
.fusion small { position: absolute; left: 7px; top: 17px; font: 700 7px/8px "Open Sans", sans-serif; }
.search {
  display: flex;
  align-items: center;
  gap: 10px;
  width: 220px;
  height: 32px;
  padding: 0 6px 0 11px;
  border: 1px solid #5a504a;
  border-radius: 16px;
  background: #48403a;
}
.search input { flex: 1; min-width: 0; padding: 0; border: 0; outline: 0; background: none; color: #fff; font: 13px/18px "Noto Sans", sans-serif; }
.search input::placeholder { color: #cfcac6; }
.clock { justify-self: end; padding-right: 23px; text-align: right; }
.clock time { display: block; }
```
FILE: grid.js
```js
// Sketch grid: one unit is 5 mm, every fifth line is a major one.
const MIN = -25, MAX = 27;
const grid = document.getElementById('grid');
let minor = '', major = '';
for (let i = MIN; i <= MAX; i++) {
  const d = `M${i} ${-MAX}V${-MIN}M${MIN} ${-i}H${MAX}`;
  minor += d;
  if (i % 5 === 0) major += d;
}
for (const [name, d] of [['grid-minor', minor], ['grid-major', major]]) {
  const path = document.createElementNS('http://www.w3.org/2000/svg', 'path');
  path.setAttribute('class', name);
  path.setAttribute('d', d);
  grid.append(path);
}
```
